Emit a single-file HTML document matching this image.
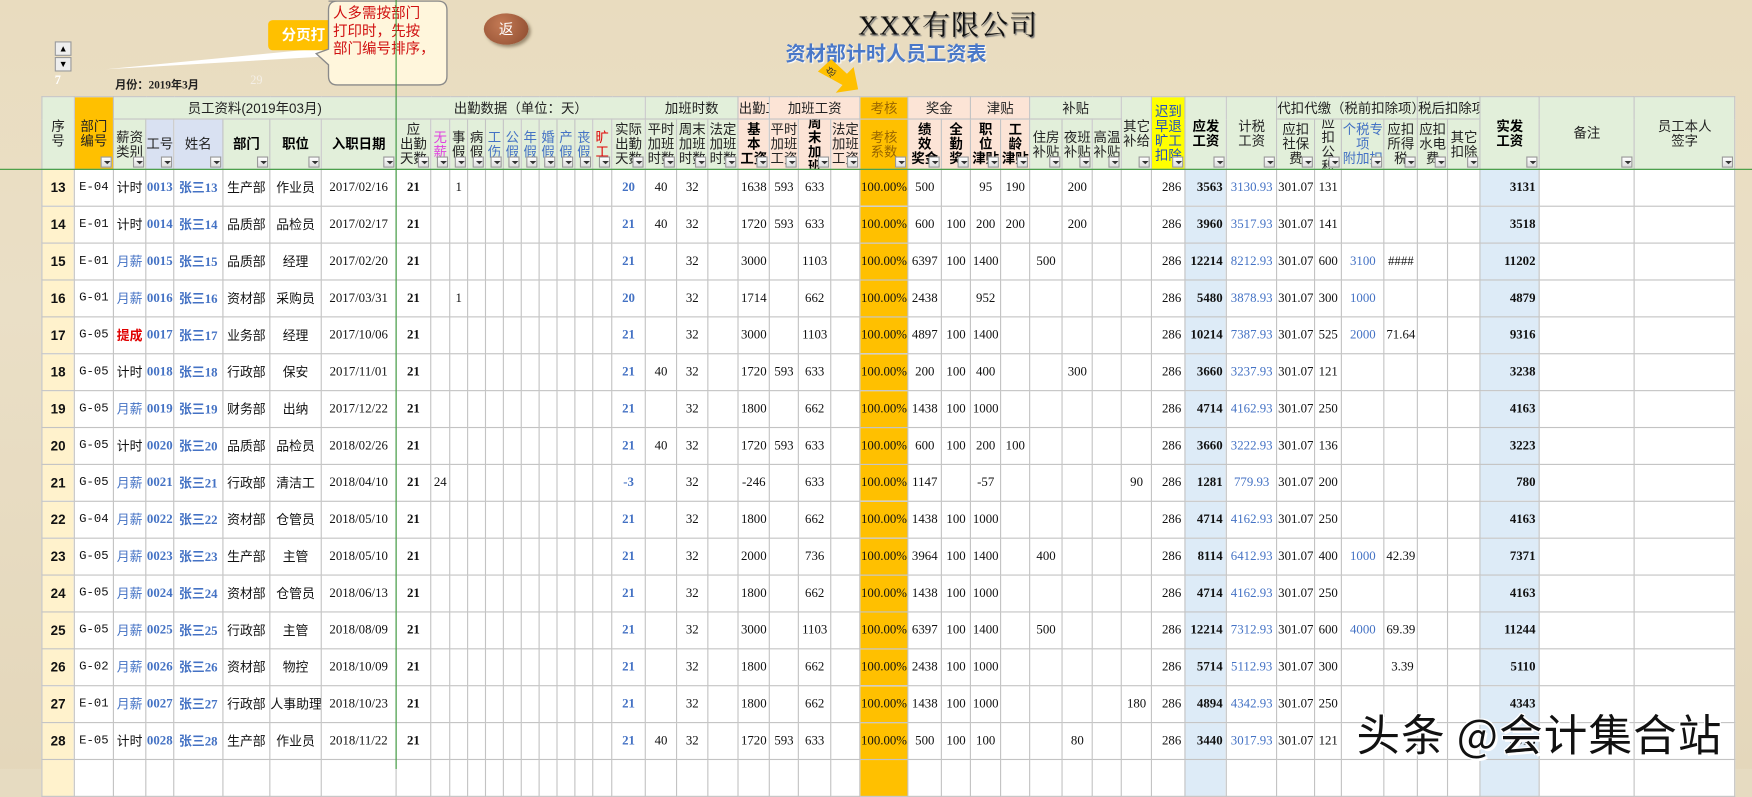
<!DOCTYPE html>
<html><head><meta charset="utf-8">
<style>
html,body{margin:0;padding:0;width:1752px;height:769px;overflow:hidden;background:#e6dbc1;}
#w{position:absolute;left:0;top:0;width:1568px;height:688px;transform:scale(1.11735,1.1177);transform-origin:0 0;
background:linear-gradient(180deg,#e9dcbf 0%,#eadfc6 40%,#e4d7bb 100%);font-family:"Liberation Serif","Noto Sans CJK SC",serif;}
.abs{position:absolute}
table{position:absolute;left:37px;top:86px;border-collapse:collapse;table-layout:fixed;width:1515px;background:#fff}
td{border:1px solid #c3c3c3;padding:0;overflow:hidden;white-space:nowrap;text-align:center;font-size:11.5px;height:32px;color:#111;font-family:"Liberation Serif","Noto Sans CJK SC",serif}
thead td{background:#e2efda;font-family:"Liberation Sans","Noto Sans CJK SC",sans-serif;font-size:12px;color:#222;white-space:normal;vertical-align:middle}
thead tr.g td{height:19px;white-space:nowrap;line-height:12px}
thead tr.r2 td{height:44px}
.hc{position:relative;height:44px;line-height:13px;overflow:hidden;display:flex;align-items:center;justify-content:center;padding-top:1px;box-sizing:border-box;white-space:normal}
.hh{height:64px}
.hc i{position:absolute;right:1px;bottom:1px;width:10px;height:10px;border:1px solid #999;background:linear-gradient(#fff,#ddd);box-sizing:border-box}
.hc i:after{content:"";position:absolute;left:2px;top:3px;border-left:3px solid transparent;border-right:3px solid transparent;border-top:3px solid #333}
.or{background:#ffc000!important}
.pk{background:#fce4d6!important}
.lb{background:#d9e1f2!important}
.ye{background:#ffff00!important}
.bd{font-weight:bold;color:#000!important}
.blt{color:#4472c4!important}
.s{background:#fff2cc;font-weight:bold;font-family:"Liberation Sans",sans-serif;font-size:12px}
.m{font-family:"Liberation Mono",monospace;font-size:11px}
.bl{color:#4472c4;font-weight:bold}
.bn{color:#4472c4}
.b{font-weight:bold}
.k{background:#ffc000}
.y{background:#ddebf7;font-weight:bold;text-align:right;padding-right:3px}
.r{text-align:right;padding-right:3px}
.red{color:#e00000;font-weight:bold}
</style></head><body><div id="w">

<div class="abs" style="left:768px;top:3px;font-size:25px;color:#111;text-shadow:1px 1px 1px #777;letter-spacing:1px;font-family:'Liberation Serif','Noto Serif CJK SC',serif">XXX有限公司</div>
<div class="abs" style="left:703px;top:34px;font-size:18px;font-weight:bold;color:#4a78c8;font-family:'Liberation Sans','Noto Sans CJK SC',sans-serif;text-shadow:1px 1px 1px #fff">资材部计时人员工资表</div>

<svg class="abs" style="left:90px;top:20px" width="220" height="50"><polygon points="5,42 210,22 210,30" fill="#fff"/></svg>
<div class="abs" style="left:240px;top:18px;width:80px;height:27px;background:#ffc000;border-radius:4px;color:#fff;font-weight:bold;font-size:13px;line-height:27px;padding-left:12px;box-sizing:border-box;font-family:'Liberation Sans','Noto Sans CJK SC',sans-serif">分页打</div>
<svg class="abs" style="left:280px;top:0" width="130" height="82"><path d="M14,1 H112 Q120,1 120,9 V68 Q120,76 112,76 H22 Q14,76 14,68 V58 L3,48 L14,44 V9 Q14,1 22,1 Z" fill="#fff6dc" stroke="#8a8a8a" stroke-width="1.2"/></svg>
<div class="abs" style="left:298px;top:4px;color:#d01010;font-size:13px;line-height:16px;font-family:'Liberation Sans','Noto Sans CJK SC',sans-serif">人多需按部门<br>打印时，先按<br>部门编号排序，</div>
<div class="abs" style="left:433px;top:12px;width:40px;height:28px;border-radius:50%;background:radial-gradient(circle at 40% 35%,#c47a55,#8b4a2e);box-shadow:2px 2px 3px #9a8a70;color:#fff;font-size:13px;line-height:28px;text-align:center;font-family:'Noto Sans CJK SC',sans-serif">返</div>
<div class="abs" style="left:49px;top:37px;width:13px;height:11px;border:1px solid #999;background:#eee;font-size:8px;line-height:11px;text-align:center">▲</div>
<div class="abs" style="left:49px;top:51px;width:13px;height:11px;border:1px solid #999;background:#eee;font-size:8px;line-height:11px;text-align:center">▼</div>
<div class="abs" style="left:49px;top:66px;color:#fff;font-size:11px;font-weight:bold">7</div>
<div class="abs" style="left:103px;top:67px;color:#222;font-size:10px;font-weight:bold">月份：2019年3月</div>
<div class="abs" style="left:224px;top:66px;color:#f4efe6;font-size:11px">29</div>
<svg class="abs" style="left:728px;top:50px" width="45" height="40"><polygon points="4,14 16,3 30,16 36,10 40,30 20,33 26,26" fill="#ffc000"/><text x="12" y="19" font-size="9" fill="#333" font-family="Noto Sans CJK SC" transform="rotate(-45 14 16)">总</text></svg>

<table>
<colgroup>
<col style="width:29px"><col style="width:35px"><col style="width:29px"><col style="width:25px"><col style="width:44px"><col style="width:42px"><col style="width:46px"><col style="width:67px"><col style="width:31px"><col style="width:17px"><col style="width:16px"><col style="width:16px"><col style="width:16px"><col style="width:16px"><col style="width:16px"><col style="width:16px"><col style="width:16px"><col style="width:16px"><col style="width:17px"><col style="width:30px"><col style="width:28px"><col style="width:28px"><col style="width:27px"><col style="width:28px"><col style="width:26px"><col style="width:29px"><col style="width:26px"><col style="width:43px"><col style="width:30px"><col style="width:26px"><col style="width:27px"><col style="width:26px"><col style="width:29px"><col style="width:27px"><col style="width:26px"><col style="width:27px"><col style="width:30px"><col style="width:37px"><col style="width:45px"><col style="width:34px"><col style="width:24px"><col style="width:38px"><col style="width:30px"><col style="width:27px"><col style="width:29px"><col style="width:53px"><col style="width:85px"><col style="width:90px">
</colgroup>
<thead>
<tr class="g">
<td rowspan="2"><div class="hc hh">序<br>号</div></td>
<td rowspan="2" class="or"><div class="hc hh">部门<br>编号<i></i></div></td>
<td colspan="6">员工资料(2019年03月)</td>
<td colspan="12">出勤数据（单位：天）</td>
<td colspan="3">加班时数</td>
<td class="pk">出勤工资</td>
<td colspan="3" class="pk">加班工资</td>
<td class="or" style="color:#996600">考核</td>
<td colspan="2" class="pk">奖金</td>
<td colspan="2" class="pk">津贴</td>
<td colspan="3">补贴</td>
<td rowspan="2"><div class="hc hh">其它<br>补给<i></i></div></td>
<td rowspan="2" class="ye"><div class="hc hh" style="color:#2050c0">迟到<br>早退<br>旷工<br>扣除<i></i></div></td>
<td rowspan="2"><div class="hc hh bd">应发<br>工资<i></i></div></td>
<td rowspan="2"><div class="hc hh">计税<br>工资<i></i></div></td>
<td colspan="4">代扣代缴（税前扣除项）</td>
<td colspan="2">税后扣除项</td>
<td rowspan="2"><div class="hc hh bd">实发<br>工资<i></i></div></td>
<td rowspan="2"><div class="hc hh">备注<i></i></div></td>
<td rowspan="2"><div class="hc hh">员工本人<br>签字<i></i></div></td>
</tr>
<tr class="r2">
<td><div class="hc">薪资<br>类别<i></i></div></td>
<td class="lb"><div class="hc">工号<i></i></div></td>
<td class="lb"><div class="hc">姓名<i></i></div></td>
<td><div class="hc bd">部门<i></i></div></td>
<td><div class="hc bd">职位<i></i></div></td>
<td><div class="hc bd">入职日期<i></i></div></td>
<td><div class="hc">应<br>出勤<br>天数<i></i></div></td>
<td><div class="hc" style="color:#e040e0">无<br>薪<i></i></div></td>
<td><div class="hc">事<br>假<i></i></div></td>
<td><div class="hc">病<br>假<i></i></div></td>
<td><div class="hc blt">工<br>伤<i></i></div></td>
<td><div class="hc blt">公<br>假<i></i></div></td>
<td><div class="hc blt">年<br>假<i></i></div></td>
<td><div class="hc blt">婚<br>假<i></i></div></td>
<td><div class="hc blt">产<br>假<i></i></div></td>
<td><div class="hc blt">丧<br>假<i></i></div></td>
<td><div class="hc" style="color:#e00000">旷<br>工<i></i></div></td>
<td><div class="hc">实际<br>出勤<br>天数<i></i></div></td>
<td><div class="hc">平时<br>加班<br>时数<i></i></div></td>
<td><div class="hc">周末<br>加班<br>时数<i></i></div></td>
<td><div class="hc">法定<br>加班<br>时数<i></i></div></td>
<td class="pk"><div class="hc bd">基<br>本<br>工资<i></i></div></td>
<td class="pk"><div class="hc">平时<br>加班<br>工资<i></i></div></td>
<td class="pk"><div class="hc bd">周<br>末<br>加<br>班<i></i></div></td>
<td class="pk"><div class="hc">法定<br>加班<br>工资<i></i></div></td>
<td class="or"><div class="hc" style="color:#996600">考核<br>系数<i></i></div></td>
<td class="pk"><div class="hc bd">绩<br>效<br>奖金<i></i></div></td>
<td class="pk"><div class="hc bd">全<br>勤<br>奖<i></i></div></td>
<td class="pk"><div class="hc bd">职<br>位<br>津贴<i></i></div></td>
<td class="pk"><div class="hc bd">工<br>龄<br>津贴<i></i></div></td>
<td><div class="hc">住房<br>补贴<i></i></div></td>
<td><div class="hc">夜班<br>补贴<i></i></div></td>
<td><div class="hc">高温<br>补贴<i></i></div></td>
<td><div class="hc">应扣<br>社保<br>费<i></i></div></td>
<td><div class="hc">应<br>扣<br>公积<i></i></div></td>
<td><div class="hc blt">个税专<br>项<br>附加扣<i></i></div></td>
<td><div class="hc">应扣<br>所得<br>税<i></i></div></td>
<td><div class="hc">应扣<br>水电<br>费<i></i></div></td>
<td><div class="hc">其它<br>扣除<i></i></div></td>
</tr>
</thead>
<tbody>
<tr><td class="s">13</td><td class="m">E-04</td><td>计时</td><td class="bl">0013</td><td class="bl">张三13</td><td>生产部</td><td>作业员</td><td>2017/02/16</td><td class="b">21</td><td></td><td>1</td><td></td><td></td><td></td><td></td><td></td><td></td><td></td><td></td><td class="bl">20</td><td>40</td><td>32</td><td></td><td>1638</td><td>593</td><td>633</td><td></td><td class="k">100.00%</td><td>500</td><td></td><td>95</td><td>190</td><td></td><td>200</td><td></td><td></td><td class="r">286</td><td class="y">3563</td><td class="bn">3130.93</td><td>301.07</td><td>131</td><td></td><td></td><td></td><td></td><td class="y">3131</td><td></td><td></td></tr>
<tr><td class="s">14</td><td class="m">E-01</td><td>计时</td><td class="bl">0014</td><td class="bl">张三14</td><td>品质部</td><td>品检员</td><td>2017/02/17</td><td class="b">21</td><td></td><td></td><td></td><td></td><td></td><td></td><td></td><td></td><td></td><td></td><td class="bl">21</td><td>40</td><td>32</td><td></td><td>1720</td><td>593</td><td>633</td><td></td><td class="k">100.00%</td><td>600</td><td>100</td><td>200</td><td>200</td><td></td><td>200</td><td></td><td></td><td class="r">286</td><td class="y">3960</td><td class="bn">3517.93</td><td>301.07</td><td>141</td><td></td><td></td><td></td><td></td><td class="y">3518</td><td></td><td></td></tr>
<tr><td class="s">15</td><td class="m">E-01</td><td class="bn">月薪</td><td class="bl">0015</td><td class="bl">张三15</td><td>品质部</td><td>经理</td><td>2017/02/20</td><td class="b">21</td><td></td><td></td><td></td><td></td><td></td><td></td><td></td><td></td><td></td><td></td><td class="bl">21</td><td></td><td>32</td><td></td><td>3000</td><td></td><td>1103</td><td></td><td class="k">100.00%</td><td>6397</td><td>100</td><td>1400</td><td></td><td>500</td><td></td><td></td><td></td><td class="r">286</td><td class="y">12214</td><td class="bn">8212.93</td><td>301.07</td><td>600</td><td class="bn">3100</td><td>####</td><td></td><td></td><td class="y">11202</td><td></td><td></td></tr>
<tr><td class="s">16</td><td class="m">G-01</td><td class="bn">月薪</td><td class="bl">0016</td><td class="bl">张三16</td><td>资材部</td><td>采购员</td><td>2017/03/31</td><td class="b">21</td><td></td><td>1</td><td></td><td></td><td></td><td></td><td></td><td></td><td></td><td></td><td class="bl">20</td><td></td><td>32</td><td></td><td>1714</td><td></td><td>662</td><td></td><td class="k">100.00%</td><td>2438</td><td></td><td>952</td><td></td><td></td><td></td><td></td><td></td><td class="r">286</td><td class="y">5480</td><td class="bn">3878.93</td><td>301.07</td><td>300</td><td class="bn">1000</td><td></td><td></td><td></td><td class="y">4879</td><td></td><td></td></tr>
<tr><td class="s">17</td><td class="m">G-05</td><td class="red">提成</td><td class="bl">0017</td><td class="bl">张三17</td><td>业务部</td><td>经理</td><td>2017/10/06</td><td class="b">21</td><td></td><td></td><td></td><td></td><td></td><td></td><td></td><td></td><td></td><td></td><td class="bl">21</td><td></td><td>32</td><td></td><td>3000</td><td></td><td>1103</td><td></td><td class="k">100.00%</td><td>4897</td><td>100</td><td>1400</td><td></td><td></td><td></td><td></td><td></td><td class="r">286</td><td class="y">10214</td><td class="bn">7387.93</td><td>301.07</td><td>525</td><td class="bn">2000</td><td>71.64</td><td></td><td></td><td class="y">9316</td><td></td><td></td></tr>
<tr><td class="s">18</td><td class="m">G-05</td><td>计时</td><td class="bl">0018</td><td class="bl">张三18</td><td>行政部</td><td>保安</td><td>2017/11/01</td><td class="b">21</td><td></td><td></td><td></td><td></td><td></td><td></td><td></td><td></td><td></td><td></td><td class="bl">21</td><td>40</td><td>32</td><td></td><td>1720</td><td>593</td><td>633</td><td></td><td class="k">100.00%</td><td>200</td><td>100</td><td>400</td><td></td><td></td><td>300</td><td></td><td></td><td class="r">286</td><td class="y">3660</td><td class="bn">3237.93</td><td>301.07</td><td>121</td><td></td><td></td><td></td><td></td><td class="y">3238</td><td></td><td></td></tr>
<tr><td class="s">19</td><td class="m">G-05</td><td class="bn">月薪</td><td class="bl">0019</td><td class="bl">张三19</td><td>财务部</td><td>出纳</td><td>2017/12/22</td><td class="b">21</td><td></td><td></td><td></td><td></td><td></td><td></td><td></td><td></td><td></td><td></td><td class="bl">21</td><td></td><td>32</td><td></td><td>1800</td><td></td><td>662</td><td></td><td class="k">100.00%</td><td>1438</td><td>100</td><td>1000</td><td></td><td></td><td></td><td></td><td></td><td class="r">286</td><td class="y">4714</td><td class="bn">4162.93</td><td>301.07</td><td>250</td><td></td><td></td><td></td><td></td><td class="y">4163</td><td></td><td></td></tr>
<tr><td class="s">20</td><td class="m">G-05</td><td>计时</td><td class="bl">0020</td><td class="bl">张三20</td><td>品质部</td><td>品检员</td><td>2018/02/26</td><td class="b">21</td><td></td><td></td><td></td><td></td><td></td><td></td><td></td><td></td><td></td><td></td><td class="bl">21</td><td>40</td><td>32</td><td></td><td>1720</td><td>593</td><td>633</td><td></td><td class="k">100.00%</td><td>600</td><td>100</td><td>200</td><td>100</td><td></td><td></td><td></td><td></td><td class="r">286</td><td class="y">3660</td><td class="bn">3222.93</td><td>301.07</td><td>136</td><td></td><td></td><td></td><td></td><td class="y">3223</td><td></td><td></td></tr>
<tr><td class="s">21</td><td class="m">G-05</td><td class="bn">月薪</td><td class="bl">0021</td><td class="bl">张三21</td><td>行政部</td><td>清洁工</td><td>2018/04/10</td><td class="b">21</td><td>24</td><td></td><td></td><td></td><td></td><td></td><td></td><td></td><td></td><td></td><td class="bl">-3</td><td></td><td>32</td><td></td><td>-246</td><td></td><td>633</td><td></td><td class="k">100.00%</td><td>1147</td><td></td><td>-57</td><td></td><td></td><td></td><td></td><td>90</td><td class="r">286</td><td class="y">1281</td><td class="bn">779.93</td><td>301.07</td><td>200</td><td></td><td></td><td></td><td></td><td class="y">780</td><td></td><td></td></tr>
<tr><td class="s">22</td><td class="m">G-04</td><td class="bn">月薪</td><td class="bl">0022</td><td class="bl">张三22</td><td>资材部</td><td>仓管员</td><td>2018/05/10</td><td class="b">21</td><td></td><td></td><td></td><td></td><td></td><td></td><td></td><td></td><td></td><td></td><td class="bl">21</td><td></td><td>32</td><td></td><td>1800</td><td></td><td>662</td><td></td><td class="k">100.00%</td><td>1438</td><td>100</td><td>1000</td><td></td><td></td><td></td><td></td><td></td><td class="r">286</td><td class="y">4714</td><td class="bn">4162.93</td><td>301.07</td><td>250</td><td></td><td></td><td></td><td></td><td class="y">4163</td><td></td><td></td></tr>
<tr><td class="s">23</td><td class="m">G-05</td><td class="bn">月薪</td><td class="bl">0023</td><td class="bl">张三23</td><td>生产部</td><td>主管</td><td>2018/05/10</td><td class="b">21</td><td></td><td></td><td></td><td></td><td></td><td></td><td></td><td></td><td></td><td></td><td class="bl">21</td><td></td><td>32</td><td></td><td>2000</td><td></td><td>736</td><td></td><td class="k">100.00%</td><td>3964</td><td>100</td><td>1400</td><td></td><td>400</td><td></td><td></td><td></td><td class="r">286</td><td class="y">8114</td><td class="bn">6412.93</td><td>301.07</td><td>400</td><td class="bn">1000</td><td>42.39</td><td></td><td></td><td class="y">7371</td><td></td><td></td></tr>
<tr><td class="s">24</td><td class="m">G-05</td><td class="bn">月薪</td><td class="bl">0024</td><td class="bl">张三24</td><td>资材部</td><td>仓管员</td><td>2018/06/13</td><td class="b">21</td><td></td><td></td><td></td><td></td><td></td><td></td><td></td><td></td><td></td><td></td><td class="bl">21</td><td></td><td>32</td><td></td><td>1800</td><td></td><td>662</td><td></td><td class="k">100.00%</td><td>1438</td><td>100</td><td>1000</td><td></td><td></td><td></td><td></td><td></td><td class="r">286</td><td class="y">4714</td><td class="bn">4162.93</td><td>301.07</td><td>250</td><td></td><td></td><td></td><td></td><td class="y">4163</td><td></td><td></td></tr>
<tr><td class="s">25</td><td class="m">G-05</td><td class="bn">月薪</td><td class="bl">0025</td><td class="bl">张三25</td><td>行政部</td><td>主管</td><td>2018/08/09</td><td class="b">21</td><td></td><td></td><td></td><td></td><td></td><td></td><td></td><td></td><td></td><td></td><td class="bl">21</td><td></td><td>32</td><td></td><td>3000</td><td></td><td>1103</td><td></td><td class="k">100.00%</td><td>6397</td><td>100</td><td>1400</td><td></td><td>500</td><td></td><td></td><td></td><td class="r">286</td><td class="y">12214</td><td class="bn">7312.93</td><td>301.07</td><td>600</td><td class="bn">4000</td><td>69.39</td><td></td><td></td><td class="y">11244</td><td></td><td></td></tr>
<tr><td class="s">26</td><td class="m">G-02</td><td class="bn">月薪</td><td class="bl">0026</td><td class="bl">张三26</td><td>资材部</td><td>物控</td><td>2018/10/09</td><td class="b">21</td><td></td><td></td><td></td><td></td><td></td><td></td><td></td><td></td><td></td><td></td><td class="bl">21</td><td></td><td>32</td><td></td><td>1800</td><td></td><td>662</td><td></td><td class="k">100.00%</td><td>2438</td><td>100</td><td>1000</td><td></td><td></td><td></td><td></td><td></td><td class="r">286</td><td class="y">5714</td><td class="bn">5112.93</td><td>301.07</td><td>300</td><td></td><td class="r">3.39</td><td></td><td></td><td class="y">5110</td><td></td><td></td></tr>
<tr><td class="s">27</td><td class="m">E-01</td><td class="bn">月薪</td><td class="bl">0027</td><td class="bl">张三27</td><td>行政部</td><td>人事助理</td><td>2018/10/23</td><td class="b">21</td><td></td><td></td><td></td><td></td><td></td><td></td><td></td><td></td><td></td><td></td><td class="bl">21</td><td></td><td>32</td><td></td><td>1800</td><td></td><td>662</td><td></td><td class="k">100.00%</td><td>1438</td><td>100</td><td>1000</td><td></td><td></td><td></td><td></td><td>180</td><td class="r">286</td><td class="y">4894</td><td class="bn">4342.93</td><td>301.07</td><td>250</td><td></td><td></td><td></td><td></td><td class="y">4343</td><td></td><td></td></tr>
<tr><td class="s">28</td><td class="m">E-05</td><td>计时</td><td class="bl">0028</td><td class="bl">张三28</td><td>生产部</td><td>作业员</td><td>2018/11/22</td><td class="b">21</td><td></td><td></td><td></td><td></td><td></td><td></td><td></td><td></td><td></td><td></td><td class="bl">21</td><td>40</td><td>32</td><td></td><td>1720</td><td>593</td><td>633</td><td></td><td class="k">100.00%</td><td>500</td><td>100</td><td>100</td><td></td><td></td><td>80</td><td></td><td></td><td class="r">286</td><td class="y">3440</td><td class="bn">3017.93</td><td>301.07</td><td>121</td><td></td><td></td><td></td><td></td><td class="y">3018</td><td></td><td></td></tr>
<tr><td class="s"></td><td></td><td></td><td></td><td></td><td></td><td></td><td></td><td></td><td></td><td></td><td></td><td></td><td></td><td></td><td></td><td></td><td></td><td></td><td></td><td></td><td></td><td></td><td></td><td></td><td></td><td></td><td class="k"></td><td></td><td></td><td></td><td></td><td></td><td></td><td></td><td></td><td></td><td class="y"></td><td></td><td></td><td></td><td></td><td></td><td></td><td></td><td class="y"></td><td></td><td></td></tr>
</tbody>
</table>

<div class="abs" style="left:354px;top:0;width:1px;height:688px;background:#3c9a3c"></div>
<div class="abs" style="left:0;top:151px;width:1568px;height:1px;background:#3c9a3c"></div>

<div class="abs" style="left:1214px;top:628px;font-size:39px;color:#111;font-family:'Noto Sans CJK SC',sans-serif;text-shadow:2px 2px 0 #fff,-1px -1px 0 #fff,1px -1px 0 #fff,-1px 1px 0 #fff;letter-spacing:1px;white-space:nowrap">头条 @会计集合站</div>
</div></body></html>
